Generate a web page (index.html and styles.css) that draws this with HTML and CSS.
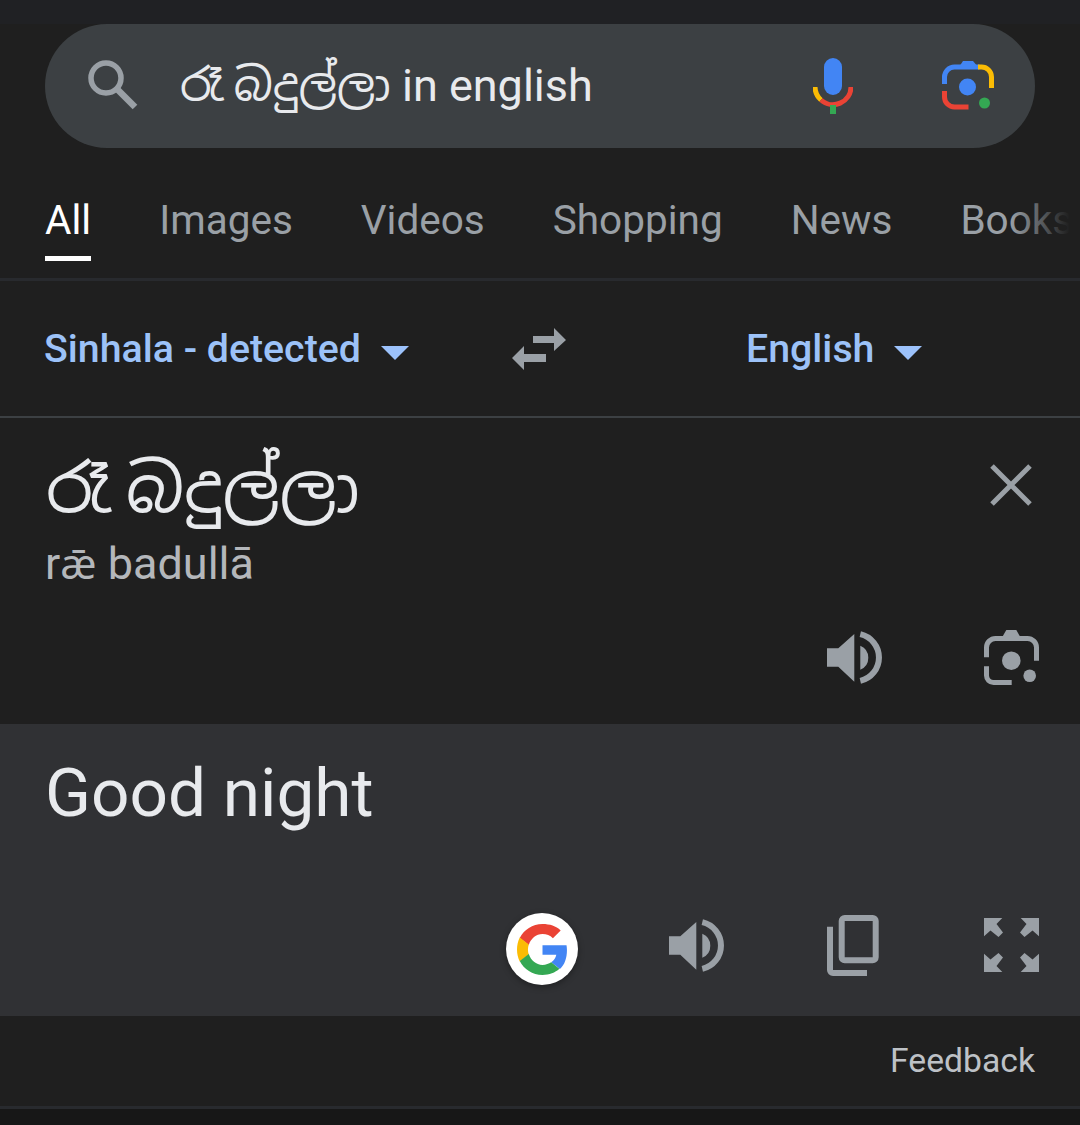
FILE: index.html
```html
<!DOCTYPE html>
<html lang="en">
<head>
<meta charset="utf-8">
<title>Translate</title>
<link rel="stylesheet" href="styles.css">
</head>
<body>
<header class="top">
  <div class="search">
    <svg class="ic-search" viewBox="0 0 52 52"><circle cx="19" cy="19" r="15" fill="none" stroke="#9aa0a6" stroke-width="5.5"/><path d="M29.5 29.5L48 48" stroke="#9aa0a6" stroke-width="6.5" fill="none"/></svg>
    <div class="query">රෑ බදුල්ලා in english</div>
    <svg class="ic-mic" viewBox="0 0 40 56"><rect x="11" y="0" width="18" height="37" rx="9" fill="#4285f4"/><path d="M2 29a18 18 0 0 0 6 13" fill="none" stroke="#fbbc04" stroke-width="5"/><path d="M8 42a18 18 0 0 0 30-13" fill="none" stroke="#ea4335" stroke-width="5"/><rect x="17" y="47" width="6" height="9" fill="#34a853"/></svg>
    <svg class="ic-lens" viewBox="0 0 52 52"><path d="M2.500 24V17a10 10 0 0 1 10-10h25" fill="none" stroke="#4285f4" stroke-width="5"/><path d="M17 7l4-6h10l5 6z" fill="#4285f4"/><path d="M36 7h3a10 10 0 0 1 10.500 10v11" fill="none" stroke="#fbbc04" stroke-width="5"/><path d="M2.500 31v6a10 10 0 0 0 10 10h14" fill="none" stroke="#ea4335" stroke-width="5"/><circle cx="25.500" cy="27" r="8.500" fill="#4285f4"/><circle cx="42.500" cy="43" r="5.500" fill="#34a853"/></svg>
  </div>
</header>
<nav class="tabs">
  <a class="tab active">All</a>
  <a class="tab">Images</a>
  <a class="tab">Videos</a>
  <a class="tab">Shopping</a>
  <a class="tab">News</a>
  <a class="tab">Books</a>
  <span class="fade"></span>
</nav>
<section class="langs">
  <div class="lang lang-src">Sinhala - detected<span class="caret"></span></div>
  <svg class="ic-swap" viewBox="0 0 54 42"><path d="M0 30L12 18v8h22v8H12v8z" fill="#9aa0a6"/><path d="M54 12L42 0v8H21v7h21v8z" fill="#9aa0a6"/></svg>
  <div class="lang lang-dst">English<span class="caret"></span></div>
</section>
<section class="source">
  <div class="src-top">
    <div>
      <div class="src-text">රෑ බදුල්ලා</div>
      <div class="translit">r<span class="ae">ǣ</span> badullā</div>
    </div>
    <svg class="ic-close" viewBox="0 0 42 42"><path d="M2 2L40 40M40 2L2 40" stroke="#9aa0a6" stroke-width="5" fill="none"/></svg>
  </div>
  <div class="src-actions">
    <svg class="ic-sound" viewBox="0 0 55 53"><path d="M0 17.300h11.300L27.300 3v47.700L11.300 35.700H0z" fill="#9aa0a6"/><path d="M33.300 14.700A13 13 0 0 1 33.300 38.700z" fill="#9aa0a6"/><path d="M33.300 3.100A24 24 0 0 1 33.300 49.900" fill="none" stroke="#9aa0a6" stroke-width="6"/></svg>
    <svg class="ic-cam" viewBox="0 0 55 55"><path d="M2.500 27.300V17.500a9 9 0 0 1 9-9h32a9 9 0 0 1 9 9v13.200" fill="none" stroke="#9aa0a6" stroke-width="5"/><path d="M18.300 7l4-7h10l4 7z" fill="#9aa0a6"/><path d="M2.500 36.300v9.200a7 7 0 0 0 7 7h18.200" fill="none" stroke="#9aa0a6" stroke-width="5"/><circle cx="27.300" cy="30.700" r="9.300" fill="#9aa0a6"/><circle cx="45.700" cy="45.700" r="6.300" fill="#9aa0a6"/></svg>
  </div>
</section>
<section class="result">
  <div class="res-text">Good night</div>
  <div class="res-actions">
    <span class="g-badge">
      <svg class="ic-g" viewBox="0 0 48 48"><path fill="#ea4335" d="M24 9.500c3.900 0 7.100 1.300 9.800 3.800l7.300-7.300C36.700 1.900 30.900 0 24 0 14.600 0 6.500 5.400 2.600 13.200l8.500 6.600C13 13.700 18 9.500 24 9.500z"/><path fill="#4285f4" d="M47 24.500c0-1.700-.2-3.300-.4-4.500H24v9h13c-.6 3-2.200 5.400-4.800 7.100l8.200 6.300C45 38.300 47 32 47 24.500z"/><path fill="#fbbc04" d="M11.100 28.800c-.5-1.500-.8-3.100-.8-4.800s.3-3.300.8-4.800l-8.500-6.600C.9 16 0 19.900 0 24s.9 8 2.600 11.400z"/><path fill="#34a853" d="M24 48c6.500 0 11.900-2.100 15.900-5.800l-7.700-6.100c-2.200 1.500-4.900 2.400-8.200 2.400-6 0-11-4.100-12.900-10.200l-8.500 6.600C6.500 42.600 14.600 48 24 48z"/></svg>
    </span>
    <svg class="ic-sound" viewBox="0 0 55 53"><path d="M0 17.300h11.300L27.300 3v47.700L11.300 35.700H0z" fill="#9aa0a6"/><path d="M33.300 14.700A13 13 0 0 1 33.300 38.700z" fill="#9aa0a6"/><path d="M33.300 3.100A24 24 0 0 1 33.300 49.900" fill="none" stroke="#9aa0a6" stroke-width="6"/></svg>
    <svg class="ic-copy" viewBox="0 0 52 61"><path d="M3 11.700V55a3 3 0 0 0 3 3h34" fill="none" stroke="#9aa0a6" stroke-width="6"/><rect x="14.700" y="3" width="34" height="42.300" rx="3" fill="none" stroke="#9aa0a6" stroke-width="6"/></svg>
    <svg class="ic-expand" viewBox="0 0 55 54">
      <path fill="#9aa0a6" d="M0 0h18.300L12.500 6 19 14.500 14.500 19 6.500 12.500 0 18.300z"/>
      <path fill="#9aa0a6" transform="translate(55 0) scale(-1 1)" d="M0 0h18.300L12.500 6 19 14.500 14.500 19 6.500 12.500 0 18.300z"/>
      <path fill="#9aa0a6" transform="translate(0 54) scale(1 -1)" d="M0 0h18.300L12.500 6 19 14.500 14.500 19 6.500 12.500 0 18.300z"/>
      <path fill="#9aa0a6" transform="translate(55 54) scale(-1 -1)" d="M0 0h18.300L12.500 6 19 14.500 14.500 19 6.500 12.500 0 18.300z"/>
    </svg>
  </div>
</section>
<footer class="feedback">Feedback</footer>
<div class="bottom"></div>
</body>
</html>
```
FILE: styles.css
```css
* { box-sizing: border-box; }
html, body { margin: 0; padding: 0; }
body {
  width: 1080px;
  height: 1125px;
  overflow: hidden;
  background: #1f1f1f;
  font-family: Roboto, "Noto Sans Sinhala", "Noto Sans", sans-serif;
  color: #e8eaed;
}
svg { display: block; flex: none; }
.top { background: linear-gradient(#202124 24px, #1f1f1f 24px); padding: 24px 45px 0; }
.search {
  height: 124px;
  border-radius: 62px;
  background: #3c4043;
  display: flex;
  align-items: center;
  padding: 0 41px 0 42px;
}
.ic-search { width: 52px; height: 52px; margin-top: -2px; }
.query { flex: 1; font-size: 45px; margin-left: 41px; line-height: 60px; }
.ic-mic { width: 40px; height: 56px; margin-right: 89px; }
.ic-lens { width: 52px; height: 52px; margin-top: -1px; }
.tabs {
  position: relative;
  height: 133px;
  padding: 0 45px;
  display: flex;
  align-items: flex-start;
  gap: 68px;
  border-bottom: 3px solid #282a2e;
  overflow: hidden;
}
.tab {
  font-size: 40.5px;
  color: #9aa0a6;
  padding-top: 50px;
  height: 113px;
  line-height: 44px;
  white-space: nowrap;
}
.tab.active { color: #fff; border-bottom: 5px solid #fff; }
.fade {
  position: absolute;
  top: 40px; right: 0;
  width: 70px; height: 70px;
  background: linear-gradient(90deg, rgba(31,31,31,0), #1f1f1f 85%);
}
.langs {
  height: 137px;
  display: flex;
  align-items: center;
  border-bottom: 2px solid #3c4043;
  padding-left: 44px;
}
.lang { color: #9cc2f8; font-size: 39.300px; font-weight: 500; display: flex; align-items: center; white-space: nowrap; margin-top: 1px; }
.caret {
  width: 0; height: 0;
  margin-left: 20px;
  margin-top: 8px;
  border: 14px solid transparent;
  border-top: 14.500px solid #9cc2fb;
  border-bottom: 0;
}
.lang-src { width: 468px; }
.ic-swap { width: 54px; height: 42px; }
.lang-dst { margin-left: 180px; }
.source { height: 306px; padding: 26px 41px 0 46px; display: flex; flex-direction: column; }
.src-top { display: flex; justify-content: space-between; align-items: flex-start; }
.src-text { font-size: 67px; line-height: 90px; color: #e8eaed; }
.translit { font-size: 45px; line-height: 50px; color: #b4b7bb; margin: 4px 0 0 -1px; }
.ae { font-family: "Noto Sans", sans-serif; font-size: 42px; }
.ic-close { width: 42px; height: 42px; margin-top: 20px; margin-right: 7px; }
.src-actions { display: flex; justify-content: flex-end; align-items: center; gap: 102px; margin-top: 41px; }
.ic-sound { width: 55px; height: 53px; }
.ic-cam { width: 55px; height: 55px; }
.result { height: 292px; background: #303134; padding: 32px 41px 0 45px; display: flex; flex-direction: column; }
.res-text { font-size: 67.500px; line-height: 74px; color: #e8eaed; }
.res-actions { display: flex; justify-content: flex-end; align-items: flex-start; margin-top: 85px; }
.g-badge {
  width: 72px; height: 72px;
  margin-top: -2px;
  border-radius: 50%;
  background: #fff;
  display: flex; align-items: center; justify-content: center;
  box-shadow: 0 2px 6px rgba(0,0,0,.35);
}
.ic-g { width: 51px; height: 51px; }
.res-actions .ic-sound { margin: 4px 103px 0 91px; }
.ic-copy { width: 52px; height: 61px; }
.ic-expand { width: 55px; height: 54px; margin: 3px 0 0 105px; }
.feedback {
  height: 93px;
  border-bottom: 3px solid #282a2e;
  text-align: right;
  padding: 24px 45px 0 0;
  font-size: 33.700px;
  line-height: 42px;
  color: #bdc1c6;
}
.bottom { height: 16px; background: #171717; }
```
